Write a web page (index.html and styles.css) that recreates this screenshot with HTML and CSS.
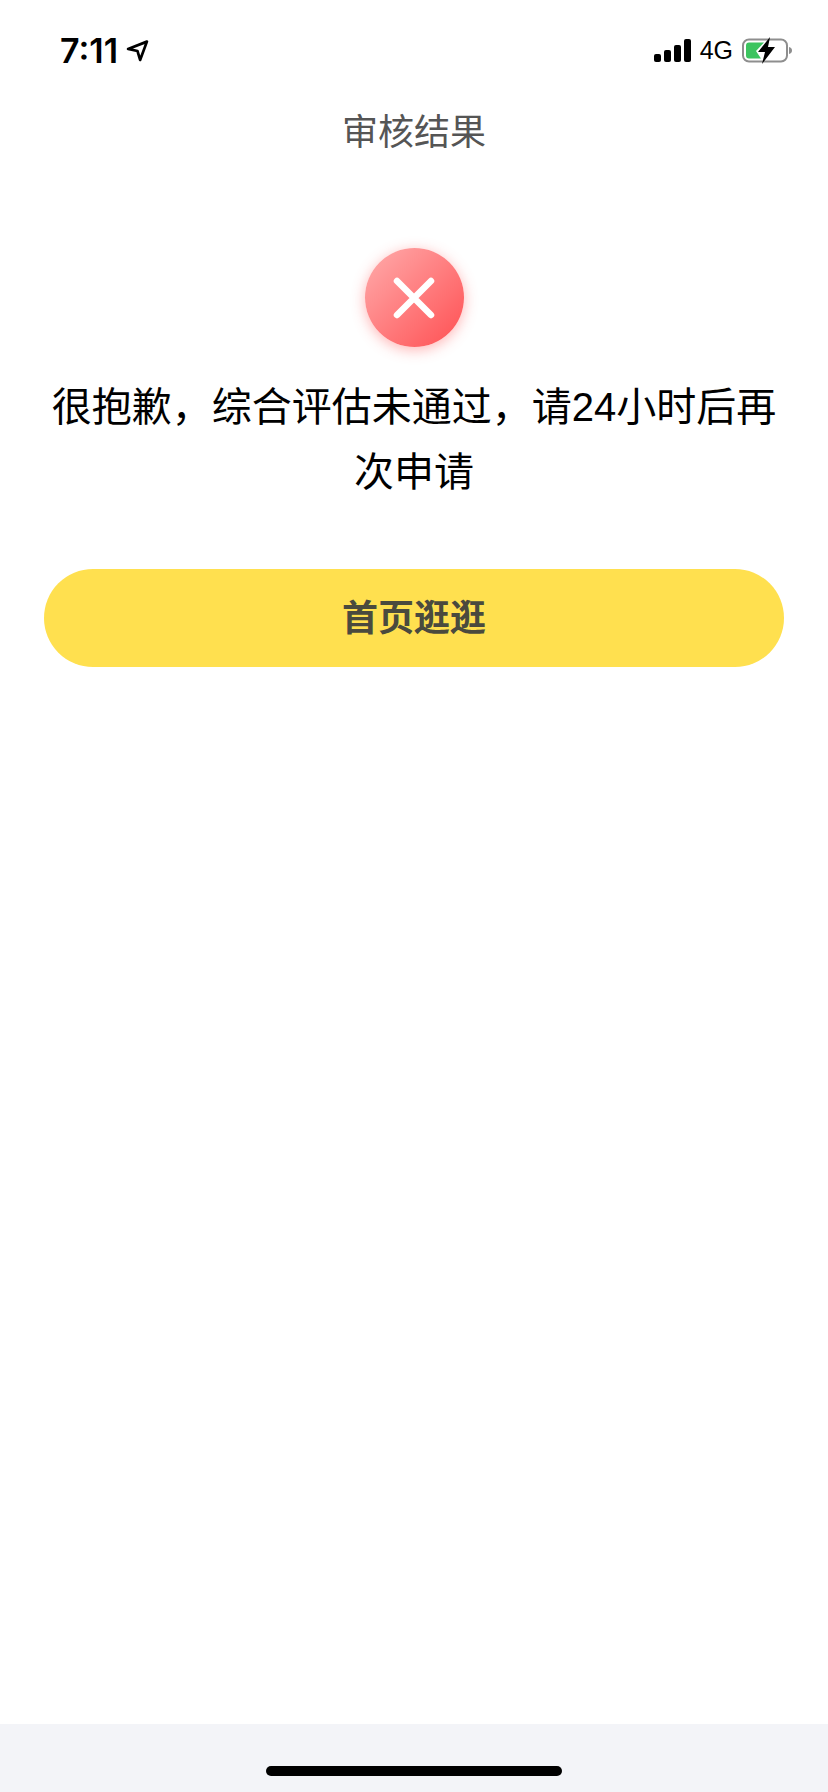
FILE: index.html
```html
<!DOCTYPE html>
<html lang="zh-CN">
<head>
    <meta charset="UTF-8">
    <meta name="viewport" content="width=device-width, initial-scale=1.0">
    <title>审核结果</title>
    <link rel="stylesheet" href="styles.css">
</head>
<body>
    <div class="page">
        <div class="status-bar">
            <div class="status-left">
                <span class="time">7:11</span>
                <svg class="location" width="23" height="23" viewBox="0 0 22 22">
                    <path d="M2 9.500 20 2.500 13.500 20 11 11.500Z" fill="none" stroke="#000" stroke-width="2.600" stroke-linejoin="round"/>
                </svg>
            </div>
            <div class="status-right">
                <div class="signal">
                    <span class="bar bar-1"></span>
                    <span class="bar bar-2"></span>
                    <span class="bar bar-3"></span>
                    <span class="bar bar-4"></span>
                </div>
                <span class="network">4G</span>
                <svg class="battery" width="52" height="27" viewBox="0 0 52 27">
                    <rect x="1" y="2.500" width="44" height="22" rx="6" fill="#fff" stroke="#8e8e8e" stroke-width="2"/>
                    <path d="M4 8.500a3 3 0 0 1 3-3H22L14 14l5 7.500H7a3 3 0 0 1-3-3Z" fill="#3cc45f"/>
                    <path d="M47 10c2 .5 3 1.700 3 3.500s-1 3-3 3.500Z" fill="#8e8e8e"/>
                    <path d="M28 0 16 15H23L20 27 33 10H26Z" fill="#000"/>
                </svg>
            </div>
        </div>

        <h1 class="nav-title">审核结果</h1>

        <div class="result">
            <div class="result-icon">
                <svg width="44" height="44" viewBox="0 0 44 44">
                    <path d="M5 5 39 39M39 5 5 39" stroke="#fff" stroke-width="6.500" stroke-linecap="round"/>
                </svg>
            </div>
            <p class="result-text">很抱歉，综合评估未通过，请24小时后再次申请</p>
            <button class="home-btn">首页逛逛</button>
        </div>

        <div class="footer">
            <span class="home-indicator"></span>
        </div>
    </div>
</body>
</html>
```

FILE: styles.css
```css
* {
    box-sizing: border-box;
}

body {
    margin: 0;
    background-color: #fff;
    font-family: "Liberation Sans", "Noto Sans CJK SC", sans-serif;
}

.page {
    display: flex;
    flex-direction: column;
    height: 1792px;
}

.status-bar {
    display: flex;
    justify-content: space-between;
    align-items: center;
    height: 88px;
    padding: 12px 34px 0 60px;
    flex-shrink: 0;
}

.status-left {
    display: flex;
    align-items: center;
    gap: 8px;
}

.time {
    font-family: Inter, "Liberation Sans", sans-serif;
    font-size: 34px;
    font-weight: 600;
    color: #000;
}

.status-right {
    display: flex;
    align-items: center;
}

.signal {
    display: flex;
    align-items: flex-end;
    gap: 3px;
    height: 23px;
}

.bar {
    width: 7px;
    background-color: #000;
    border-radius: 2px;
}

.bar-1 { height: 8px; }
.bar-2 { height: 12px; }
.bar-3 { height: 17px; }
.bar-4 { height: 23px; }

.network {
    margin: 0 9px 0 9px;
    font-size: 25px;
    color: #000;
}

.nav-title {
    margin: 0;
    height: 88px;
    padding-top: 10px;
    font-size: 36px;
    font-weight: 400;
    line-height: 70px;
    text-align: center;
    color: #555;
}

.result {
    display: flex;
    flex-direction: column;
    align-items: center;
    padding: 72px 44px 0;
}

.result-icon {
    display: flex;
    justify-content: center;
    align-items: center;
    width: 99px;
    height: 99px;
    border-radius: 50%;
    background: linear-gradient(135deg, #ffacac, #ff4f52);
    box-shadow: 0 3px 14px rgba(255, 90, 90, 0.45);
}

.result-text {
    margin: 28px 0 0;
    font-size: 40px;
    line-height: 65px;
    text-align: center;
    color: #000;
}

.home-btn {
    width: 100%;
    height: 98px;
    margin-top: 64px;
    padding: 0 0 7px;
    border: 0;
    border-radius: 49px;
    background-color: #ffe04f;
    font-family: inherit;
    font-size: 36px;
    font-weight: 700;
    color: #4a4a3e;
}

.footer {
    display: flex;
    justify-content: center;
    align-items: flex-start;
    height: 68px;
    margin-top: auto;
    padding-top: 42px;
    background-color: #f3f4f8;
}

.home-indicator {
    width: 296px;
    height: 10px;
    border-radius: 5px;
    background-color: #000;
}
```
